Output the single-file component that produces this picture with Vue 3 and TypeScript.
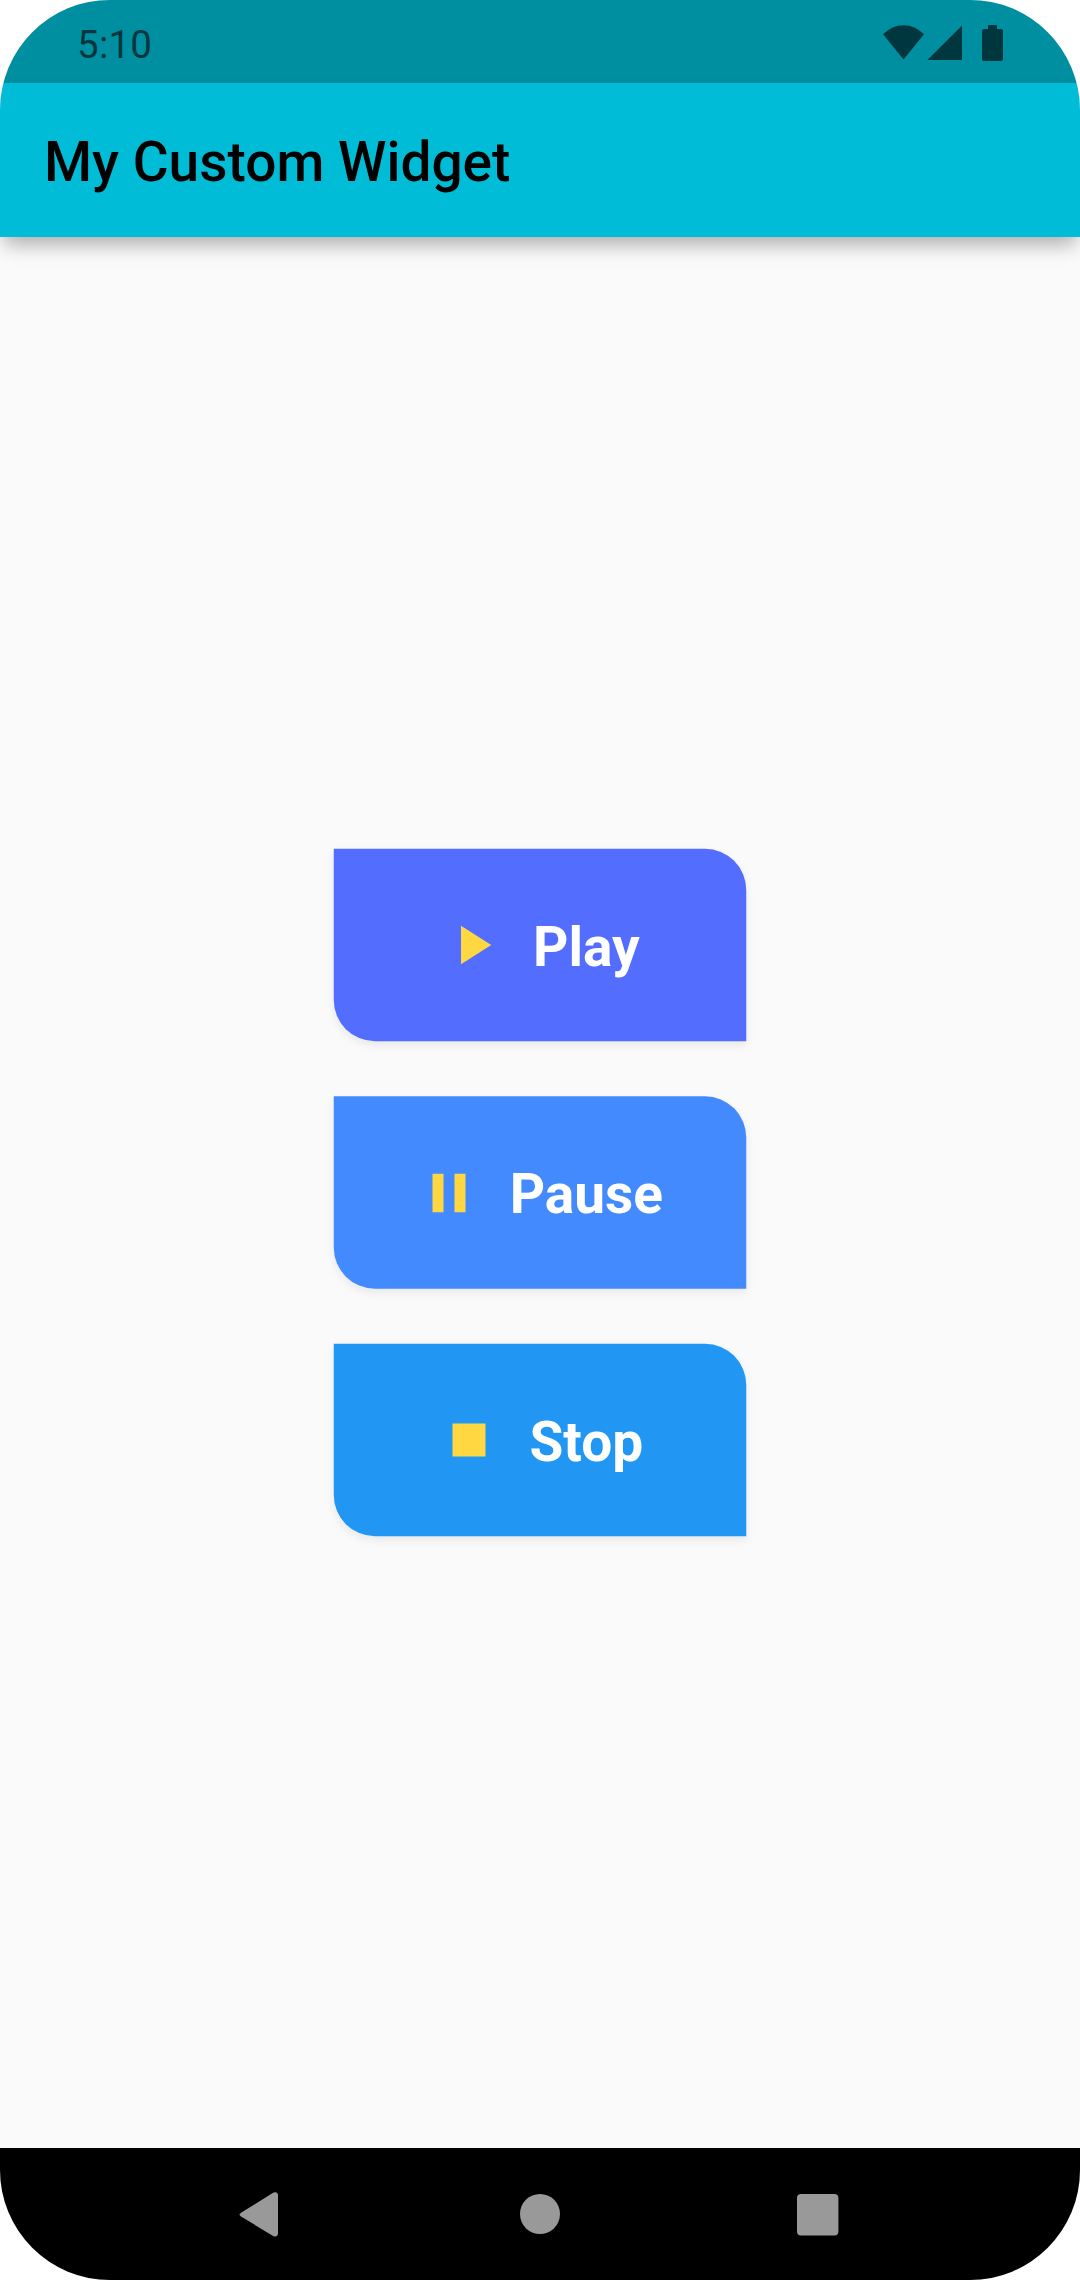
<script setup lang="ts">
interface MediaAction {
  label: string
  color: string
  icon: string
}

const actions: MediaAction[] = [
  { label: 'Play', color: '#536dfe', icon: 'M8 5v14l11-7z' },
  { label: 'Pause', color: '#448aff', icon: 'M6 19h4V5H6v14zm8-14v14h4V5h-4z' },
  { label: 'Stop', color: '#2196f3', icon: 'M6 6h12v12H6z' },
]
</script>

<template>
  <div class="device">
    <div class="status-bar">
      <span class="clock">5:10</span>
      <svg class="status-icons" width="121" height="37" viewBox="883 25 121 37">
        <path d="M883 34.2Q892 25.2 903.5 25.2T924 34.2L903.5 59.5Z" />
        <path d="M927.4 60L962 25.4V60Z" />
        <path d="M988 25h9v4h4a2 2 0 0 1 2 2v28a2 2 0 0 1-2 2h-17a2 2 0 0 1-2-2V31a2 2 0 0 1 2-2h4z" />
      </svg>
    </div>
    <header class="app-bar">
      <h1 class="title">My Custom Widget</h1>
    </header>
    <main class="content">
      <button v-for="action in actions" :key="action.label" class="action">
        <svg class="surface" viewBox="0 0 150 70" :style="{ color: action.color }">
          <path d="M0 0H135A15 15 0 0 1 150 15V70H15A15 15 0 0 1 0 55Z" />
        </svg>
        <svg class="icon" viewBox="0 0 24 24"><path :d="action.icon" /></svg>
        <span class="label">{{ action.label }}</span>
      </button>
    </main>
    <nav class="nav-bar">
      <svg class="nav-icon back" width="40" height="46" viewBox="0 0 40 46">
        <path d="M2 20.7L34.5 .6Q38.5 -1 39 3V41.5Q38.5 45.6 34.5 44.2L2 24.5Q-.8 22.5 2 20.7Z" />
      </svg>
      <svg class="nav-icon home" width="42" height="42" viewBox="0 0 42 42"><circle cx="21" cy="20" r="20" /></svg>
      <svg class="nav-icon recent" width="42" height="42" viewBox="0 0 42 42">
        <rect width="41.4" height="41.4" rx="4" />
      </svg>
    </nav>
  </div>
</template>

<style>
body {
  background: #fff;
}
</style>

<style scoped>
.device {
  display: flex;
  flex-direction: column;
  width: 1080px;
  height: 2280px;
  overflow: hidden;
  border-radius: 110px;
  background: #fafafa;
  font-family: Roboto, sans-serif;
}
.status-bar {
  display: flex;
  justify-content: space-between;
  align-items: flex-start;
  box-sizing: border-box;
  height: 83px;
  padding: 25px 76px 0 77px;
  background: #008ea1;
  color: #00363d;
}
.clock {
  margin-top: -3px;
  font-size: 38.5px;
  line-height: 45px;
  letter-spacing: 0.25px;
}
.status-icons {
  fill: #00363d;
}
.app-bar {
  position: relative;
  display: flex;
  align-items: center;
  box-sizing: border-box;
  height: 154px;
  padding: 4px 0 0 44px;
  background: #00bcd6;
  box-shadow: 0 11px 19px -4px rgba(0, 0, 0, 0.32);
}
.title {
  margin: 0;
  color: #000;
  font-size: 55px;
  font-weight: 500;
  line-height: 64px;
}
.content {
  display: flex;
  flex: 1;
  flex-direction: column;
  align-items: center;
  justify-content: center;
  gap: 55px;
}
.action {
  position: relative;
  display: flex;
  align-items: center;
  justify-content: center;
  gap: 27.5px;
  box-sizing: border-box;
  width: 412.5px;
  height: 192.5px;
  padding: 0 0.8px 0 0;
  border: 0;
  background: none;
  color: #fff;
  font-family: inherit;
}
.surface {
  position: absolute;
  inset: 0;
  width: 412.5px;
  height: 192.5px;
  overflow: visible;
  fill: currentColor;
  filter: drop-shadow(0 4px 4px rgba(0, 0, 0, 0.07));
  transform: translate(-0.25px, -0.25px);
}
.action:nth-child(2) .surface {
  transform: translate(-0.25px, 0.25px);
}
.icon {
  position: relative;
  width: 66px;
  height: 66px;
  fill: #ffd740;
}
.label {
  position: relative;
  padding-top: 4px;
  font-size: 55px;
  font-weight: 700;
  line-height: 64px;
}
.action:nth-child(2) .label {
  padding-top: 2.5px;
}
.nav-bar {
  display: flex;
  align-items: center;
  justify-content: space-between;
  box-sizing: border-box;
  height: 132px;
  padding: 2px 241px 0 239px;
  background: #000;
}
.nav-icon {
  fill: #999;
}
.home {
  margin-left: 4px;
}
</style>
